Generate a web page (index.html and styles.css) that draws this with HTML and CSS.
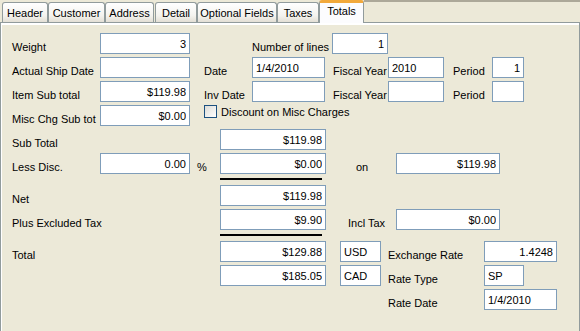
FILE: index.html
```html
<!DOCTYPE html>
<html lang="en">
<head>
  <meta charset="UTF-8" />
  <title>Order Totals</title>
  <link rel="stylesheet" href="styles.css">
</head>
<body>
  <div class="tabs">
    <div class="tab tab-header">Header</div>
    <div class="tab tab-customer">Customer</div>
    <div class="tab tab-address">Address</div>
    <div class="tab tab-detail">Detail</div>
    <div class="tab tab-optional">Optional Fields</div>
    <div class="tab tab-taxes">Taxes</div>
    <div class="tab tab-totals active">Totals</div>
    <div class="tabs-fill"></div>
  </div>

  <div class="panel">
    <!-- weights, dates and periods -->
    <div class="grid grid-top">
      <label class="lbl c1">Weight</label>
      <input class="fld num c2" value="3">
      <label class="lbl c5-7">Number of lines</label>
      <input class="fld num c7" value="1">

      <label class="lbl c1">Actual Ship Date</label>
      <input class="fld c2" value="">
      <label class="lbl c4">Date</label>
      <input class="fld c5" value="1/4/2010">
      <label class="lbl c7 pad-1">Fiscal Year</label>
      <input class="fld c8" value="2010">
      <label class="lbl c10">Period</label>
      <input class="fld num c11" value="1">

      <label class="lbl c1">Item Sub total</label>
      <input class="fld num c2" value="$119.98">
      <label class="lbl c4">Inv Date</label>
      <input class="fld c5" value="">
      <label class="lbl c7 pad-1">Fiscal Year</label>
      <input class="fld c8" value="">
      <label class="lbl c10">Period</label>
      <input class="fld num c11" value="">

      <label class="lbl c1">Misc Chg Sub tot</label>
      <input class="fld num c2" value="$0.00">
      <div class="check c4-end">
        <span class="box"></span>
        <span class="check-text">Discount on Misc Charges</span>
      </div>
    </div>

    <!-- totals -->
    <div class="grid grid-bottom">
      <label class="lbl c1">Sub Total</label>
      <input class="fld num c4" value="$119.98">

      <label class="lbl c1">Less Disc.</label>
      <input class="fld num c2" value="0.00">
      <label class="lbl c3 pad-7">%</label>
      <input class="fld num c4" value="$0.00">
      <label class="lbl c5-9 pad-30">on</label>
      <input class="fld num c9-11" value="$119.98">

      <div class="rule c4"></div>

      <label class="lbl c1">Net</label>
      <input class="fld num c4" value="$119.98">

      <label class="lbl c1">Plus Excluded Tax</label>
      <input class="fld num c4" value="$9.90">
      <label class="lbl c5-9 pad-22">Incl Tax</label>
      <input class="fld num c9-11" value="$0.00">

      <div class="rule c4"></div>

      <label class="lbl c1">Total</label>
      <input class="fld num c4" value="$129.88">
      <input class="fld c6" value="USD">
      <label class="lbl c8-10">Exchange Rate</label>
      <input class="fld num c10-13" value="1.4248">

      <input class="fld num c4" value="$185.05">
      <input class="fld c6" value="CAD">
      <label class="lbl c8-10">Rate Type</label>
      <input class="fld c10-12" value="SP">

      <label class="lbl c8-10">Rate Date</label>
      <input class="fld c10-13" value="1/4/2010">
    </div>
  </div>
</body>
</html>
```

FILE: styles.css
```css
body {
  margin: 0;
  width: 580px;
  height: 331px;
  overflow: hidden;
  background-color: #ECE9D8;
  font: 11px "Liberation Sans", Arial, sans-serif;
  color: #000;
}

/* Tab strip */
.tabs {
  display: flex;
  align-items: flex-end;
  height: 22px;
  padding-left: 2px;
}

.tab {
  box-sizing: border-box;
  height: 20px;
  padding-top: 4px;
  line-height: 13px;
  text-align: center;
  white-space: nowrap;
  border: 1px solid #919B9C;
  border-bottom: none;
  border-radius: 3px 3px 0 0;
  background: linear-gradient(#FFFFFF, #F4F3EF 65%, #E3DFD5);
}

.tab-header { width: 46px; }
.tab-customer { width: 57px; }
.tab-address { width: 49px; margin-right: 1px; }
.tab-detail { width: 42px; }
.tab-optional { width: 80px; }
.tab-taxes { width: 42px; }
.tab-totals { width: 45px; }

.tab.active {
  position: relative;
  z-index: 1;
  height: 23px;
  margin-bottom: -1px;
  padding-top: 2px;
  border-top: 3px solid #F2A93B;
  background: #FCFCFE;
}

.tabs-fill {
  flex: 1;
  align-self: stretch;
  border-top: 2px solid #ACA899;
}

/* Tab page */
.panel {
  box-sizing: border-box;
  height: 320px;
  padding: 10px 0 0 11px;
  border: 1px solid #919B9C;
  box-shadow: inset 1px 2px #FFFFFF;
}

.grid {
  display: grid;
  row-gap: 3px;
}

.grid-top {
  grid-template-columns: 88px 90px 14px 48px 73px 7px 56px 56px 9px 39px 32px;
  grid-template-rows: repeat(4, 21px);
  margin-bottom: 3px;
}

.grid-bottom {
  grid-template-columns: 88px 90px 30px 106px 14px 41px 7px 8px 88px 16px 24px 33px;
  grid-template-rows: 21px 21px 5px 21px 21px 5px 21px 21px 21px;
}

.c1 { grid-column: 1; }
.c2 { grid-column: 2; }
.c3 { grid-column: 3; }
.c4 { grid-column: 4; }
.c5 { grid-column: 5; }
.c6 { grid-column: 6; }
.c7 { grid-column: 7; }
.c8 { grid-column: 8; }
.c10 { grid-column: 10; }
.c11 { grid-column: 11; }
.c5-7 { grid-column: 5 / 7; }
.c5-9 { grid-column: 5 / 9; }
.c8-10 { grid-column: 8 / 10; }
.c9-11 { grid-column: 9 / 11; }
.c10-12 { grid-column: 10 / 12; }
.c10-13 { grid-column: 10 / 13; }
.c4-end { grid-column: 4 / -1; }

.pad-1 { padding-left: 1px; }
.pad-7 { padding-left: 7px; }
.pad-22 { padding-left: 22px; }
.pad-30 { padding-left: 30px; }

.lbl {
  align-self: end;
  line-height: 13px;
  white-space: nowrap;
}

.fld {
  box-sizing: border-box;
  width: 100%;
  height: 21px;
  margin: 0;
  padding: 0 3px;
  border: 1px solid #7F9DB9;
  background: #FFFFFF;
  font: inherit;
  color: #000;
  outline: none;
}

.num {
  text-align: right;
}

.rule {
  align-self: start;
  width: 102px;
  height: 2px;
  margin-top: 1px;
  background: #000;
}

/* Checkbox */
.check {
  align-self: start;
  display: flex;
  align-items: flex-start;
}

.box {
  box-sizing: border-box;
  width: 13px;
  height: 13px;
  margin-right: 4px;
  border: 1px solid #1C5180;
  background: linear-gradient(135deg, #DCDCD7, #FFFFFF);
}

.check-text {
  padding-top: 1px;
  line-height: 13px;
  white-space: nowrap;
}
```
